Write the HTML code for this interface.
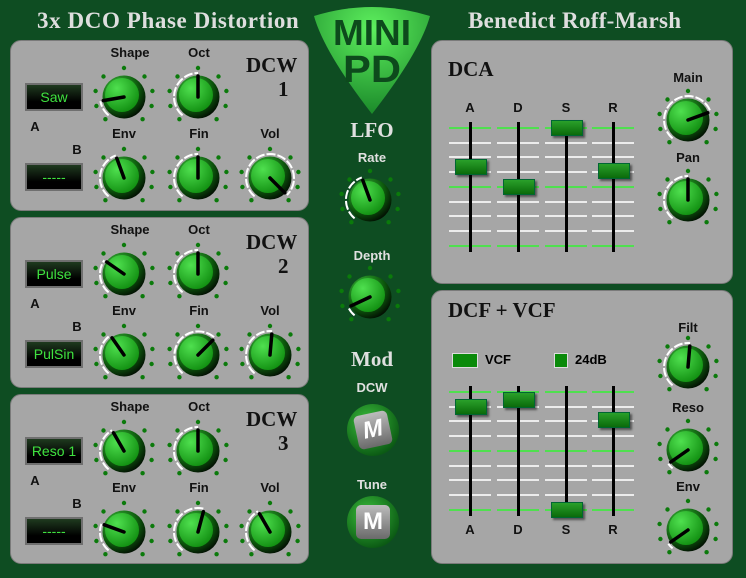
<!DOCTYPE html>
<html><head><meta charset="utf-8">
<style>
body{margin:0;width:746px;height:578px;background:#0e4d22;overflow:hidden;position:relative;font-family:"Liberation Sans",sans-serif}
.t{position:absolute;white-space:nowrap}
.panel{position:absolute;background:#a6a6a6;border-radius:11px;border:1px solid #7a7a7a}
.title{color:#dedede;font-weight:bold;font-size:23px;font-family:"Liberation Serif",serif}
.lbl{font-weight:bold;font-size:13px;color:#111;transform:translateX(-50%)}
.disp{position:absolute;width:58px;height:28px;background:linear-gradient(#1f3a1f,#000 70%);border:2px solid #6f6f6f;box-sizing:border-box;color:#3fe23f;font-size:14px;text-align:center;line-height:24px}
.big{font-family:"Liberation Serif",serif;font-weight:bold;font-size:21px;color:#111}
.lbl.wl{color:#e0e0e0}
.big.wl{color:#e0e0e0;transform:translateX(-50%)}
</style></head><body>
<div class="t title" style="left:37px;top:8px;letter-spacing:0.6px">3x DCO Phase Distortion</div>
<div class="t title" style="left:468px;top:8px;letter-spacing:0.3px">Benedict Roff-Marsh</div>

<svg class="t" style="left:310px;top:2px" width="124" height="120">
<defs><radialGradient id="cone" cx="0.5" cy="0.2" r="0.8"><stop offset="0" stop-color="#5ef05e"/><stop offset="1" stop-color="#1b8a2a"/></radialGradient></defs>
<path d="M4 14 Q62 -4 120 14 Q110 50 62 112 Q14 50 4 14Z" fill="url(#cone)"/>
<text x="62" y="43" text-anchor="middle" font-family="Liberation Sans" font-weight="bold" font-size="36" fill="#0d4a1c" textLength="78" lengthAdjust="spacingAndGlyphs">MINI</text>
<text x="62" y="80" text-anchor="middle" font-family="Liberation Sans" font-weight="bold" font-size="38" fill="#0d4a1c" textLength="58" lengthAdjust="spacingAndGlyphs">PD</text>
</svg>

<div class="panel" style="left:10px;top:40px;width:297px;height:169px"></div>
<div class="panel" style="left:10px;top:217px;width:297px;height:169px"></div>
<div class="panel" style="left:10px;top:394px;width:297px;height:168px"></div>
<div class="panel" style="left:431px;top:40px;width:300px;height:242px"></div>
<div class="panel" style="left:431px;top:290px;width:300px;height:272px"></div>

<div id="root"></div>
<script>
var R=document.getElementById('root'),h='';
function T(x,y,s,c){h+='<div class="t '+(c||'lbl')+'" style="left:'+x+'px;top:'+y+'px">'+s+'</div>';}
function K(cx,cy,a){var s='<svg class="t" style="left:'+(cx-34)+'px;top:'+(cy-34)+'px" width="68" height="68"><g transform="translate(34,34)">';
 var d=[0,45,-45,78,-78,108,-108,140,-140];
 d.forEach(function(g){var r=g*Math.PI/180;s+='<circle cx="'+(29*Math.sin(r)).toFixed(1)+'" cy="'+(-29*Math.cos(r)).toFixed(1)+'" r="2.2" fill="#0b7a0b"/>';});
 var a0=-140*Math.PI/180,a1=a*Math.PI/180;if(a>-140){var large=(a+140)>180?1:0;s+='<path d="M'+(24*Math.sin(a0)).toFixed(1)+' '+(-24*Math.cos(a0)).toFixed(1)+' A24 24 0 '+large+' 1 '+(24*Math.sin(a1)).toFixed(1)+' '+(-24*Math.cos(a1)).toFixed(1)+'" fill="none" stroke="#fff" stroke-width="2" stroke-dasharray="9 2"/>';}
 s+='<circle r="21.5" fill="url(#ko)"/><circle cx="-2" cy="-2" r="17" fill="url(#kb)"/>';
 s+='<line x1="0" y1="0" x2="'+(21*Math.sin(a1)).toFixed(1)+'" y2="'+(-21*Math.cos(a1)).toFixed(1)+'" stroke="#000" stroke-width="3.5" stroke-linecap="round"/></g></svg>';h+=s;}
h+='<svg width="0" height="0" style="position:absolute"><defs><radialGradient id="ko" cx="0.35" cy="0.3" r="0.8"><stop offset="0" stop-color="#3ec43e"/><stop offset="0.6" stop-color="#0d5a0d"/><stop offset="1" stop-color="#000"/></radialGradient><radialGradient id="kb" cx="0.35" cy="0.3" r="0.8"><stop offset="0" stop-color="#4fe04f"/><stop offset="1" stop-color="#0d8a0d"/></radialGradient></defs></svg>';
var P=[[0,['Saw','-----'],[-100,0,-20,0,135],'1'],[177,['Pulse','PulSin'],[-55,0,-35,45,5],'2'],[354,['Reso 1','-----'],[-30,0,-70,15,-30],'3']];
P.forEach(function(p){var o=p[0];
 T(130,45+o,'Shape');T(199,45+o,'Oct');T(124,126+o,'Env');T(199,126+o,'Fin');T(270,126+o,'Vol');
 h+='<div class="t big" style="left:246px;top:'+(53+o)+'px">DCW</div><div class="t big" style="left:278px;top:'+(77+o)+'px">'+p[3]+'</div>';
 h+='<div class="disp" style="left:25px;top:'+(83+o)+'px">'+p[1][0]+'</div><div class="disp" style="left:25px;top:'+(163+o)+'px">'+p[1][1]+'</div>';
 T(35,119+o,'A');T(77,142+o,'B');
 K(124,97+o,p[2][0]);K(198,97+o,p[2][1]);K(124,178+o,p[2][2]);K(198,178+o,p[2][3]);K(270,178+o,p[2][4]);
});
T(372,118,'LFO','big wl');T(372,150,'Rate','lbl wl');K(370,200,-20);T(372,248,'Depth','lbl wl');K(370,297,-115);
T(372,347,'Mod','big wl');T(372,380,'DCW','lbl wl');T(372,477,'Tune','lbl wl');
function B(cx,cy,it){h+='<div class="t" style="left:'+(cx-26)+'px;top:'+(cy-26)+'px;width:52px;height:52px;border-radius:50%;background:radial-gradient(circle at 40% 35%,#3cc03c,#0b5a14 75%)"></div><div class="t" style="left:'+(cx-17)+'px;top:'+(cy-17)+'px;width:34px;height:34px;border-radius:5px;background:linear-gradient(#bcbcbc,#6a6a6a);color:#fff;font-weight:bold;font-size:24px;text-align:center;line-height:34px;'+(it?'transform:rotate(-12deg);font-style:italic':'')+'">M</div>';}
B(373,430,1);B(373,522,0);
T(448,57,'DCA','t big');T(448,298,'DCF + VCF','t big');
function S(top,ys,lbly,th){var X=[470,518,566,613];
 X.forEach(function(x,i){for(var j=0;j<9;j++){var y=top+j*14.7;h+='<div class="t" style="left:'+(x-21)+'px;top:'+(y-1)+'px;width:42px;height:2px;background:'+(j%4==0?'#4fe04f':'#ececec')+'"></div>';}
 h+='<div class="t" style="left:'+(x-1)+'px;top:'+(top-6)+'px;width:3px;height:130px;background:#000"></div>';
 h+='<div class="t" style="left:'+(x-15)+'px;top:'+(th[i]-7)+'px;width:30px;height:14px;background:linear-gradient(#2aa02a,#0a6a0a);border:1px solid #063;box-shadow:2px 2px 2px rgba(0,0,0,.5)"></div>';
 T(x,lbly,'ADSR'[i]);});}
S(128,0,100,[166,186,127,170]);S(392,0,522,[406,399,509,419]);
T(688,70,'Main');K(688,120,70);T(688,150,'Pan');K(688,200,0);
T(688,320,'Filt');K(688,367,5);T(688,400,'Reso');K(688,450,-125);T(688,479,'Env');K(688,530,-125);
h+='<div class="t" style="left:452px;top:353px;width:24px;height:13px;background:#0a8a0a;border:1px solid #ddd"></div><div class="t" style="left:485px;top:352px;font-weight:bold;font-size:13px">VCF</div>';
h+='<div class="t" style="left:554px;top:353px;width:12px;height:13px;background:#0a8a0a;border:1px solid #ddd"></div><div class="t" style="left:575px;top:352px;font-weight:bold;font-size:13px">24dB</div>';
R.innerHTML=h;
</script>
</body></html>
